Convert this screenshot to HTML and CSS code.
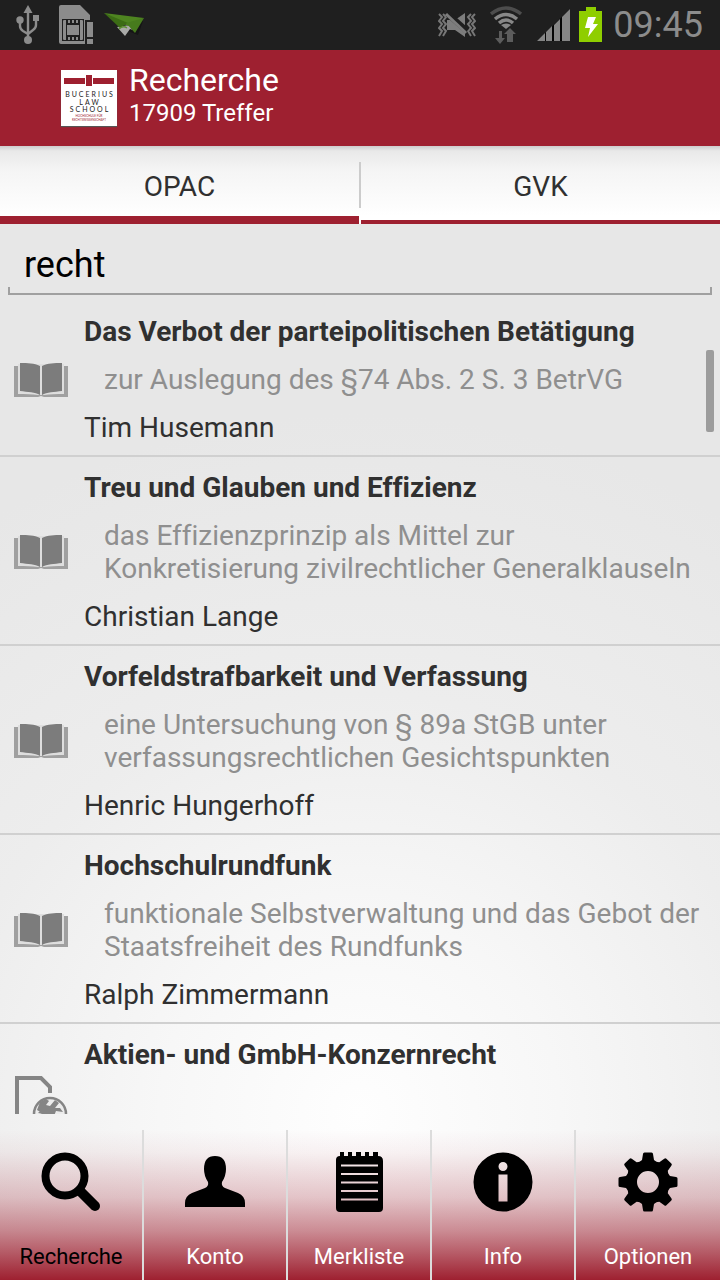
FILE: index.html
```html
<!DOCTYPE html>
<html lang="de">
<head>
<meta charset="utf-8">
<meta name="viewport" content="width=device-width, initial-scale=1">
<title>Recherche</title>
<link rel="stylesheet" href="styles.css">
</head>
<body>
<svg class="defs" width="0" height="0" aria-hidden="true">
  <symbol id="book" viewBox="0 0 56 36">
    <path fill="#a0a0a0" d="M1 4h4v26l20 1 2 2h2l2-2 20-1V4h4v31H31l-3-1-3 1H1z"/>
    <path fill="#dedede" d="M5 2h46v30c-8 0-14 0-20 1h-6c-6-1-12-1-20-1z"/>
    <path fill="#7c7c7c" d="M7 1c8 0 14 0 20 3v29c-5-3-12-3-20-4zM49 1c-8 0-14 0-20 3v29c5-3 12-3 20-4z"/>
  </symbol>
</svg>
<div class="app">
  <div class="status">
    <div class="status-group">
      <svg width="24" height="40" viewBox="0 0 24 40">
        <g fill="none" stroke="#8c8c8c" stroke-width="2.400"><path d="M12 6v28M4 15v6q0 3 3 5l5 3M20 13v7q0 3-3 5l-5 4"/></g>
        <g fill="#8c8c8c"><path d="M12 0l4.500 8h-9z"/><circle cx="4" cy="15" r="3.700"/><path d="M17 10h6v6h-6z"/><circle cx="12" cy="35" r="4"/></g>
      </svg>
      <svg class="sim" width="34" height="40" viewBox="0 0 34 40">
        <path fill="#8c8c8c" d="M2 0h19l10 10v5h-5v24H2q-2 0-2-2V2q0-2 2-2z"/>
        <path fill="#1f1f1f" d="M3 14h22v22H3z"/>
        <path fill="#8c8c8c" d="M4 16q0-1 1-1h2v20H5q-1 0-1-1zM21 15h2q1 0 1 1v18q0 1-1 1h-2zM8 20h12v10H8zM9 15h2v3H9zM13 15h2v3h-2zM17 15h2v3h-2zM9 32h2v3H9zM13 32h2v3h-2zM17 32h2v3h-2zM28 17h6v15h-6zM28 34h6v5h-6z"/>
      </svg>
      <svg width="42" height="26" viewBox="0 0 42 26">
        <path fill="#151515" d="M14 15l20 8 5-14z"/>
        <path fill="#a9aaa8" d="M13 15l12-2 4 5-3-1-5 7z"/>
        <path fill="#4e8420" d="M0 1l40 5-16 8z"/><path fill="#3c6c15" d="M0 1l24 10-8 5z"/><path fill="#477b1d" d="M22 11L40 6l-9 15z"/>
        <path fill="none" stroke="#5d8f32" stroke-width="1.500" d="M15 17q4-4 8-1"/>
      </svg>
    </div>
    <div class="status-group status-right">
      <svg width="38" height="28" viewBox="0 0 38 28">
        <g fill="none" stroke="#777" stroke-width="2"><path d="M1 3l3 3-3 4 3 3-3 4 3 3-3 5M5 3l3 3-3 4 3 3-3 4 3 3-3 5M33 3l-3 3 3 4-3 3 3 4-3 3 3 5M37 3l-3 3 3 4-3 3 3 4-3 3 3 5"/></g>
        <path fill="#7d7d7d" d="M9 9h8l10-7v24l-10-7H9z"/>
        <path stroke="#1f1f1f" stroke-width="6" d="M10 3l19 17"/><path stroke="#7d7d7d" stroke-width="3" d="M8 3l20 19"/>
      </svg>
      <svg class="wifi" width="32" height="38" viewBox="0 0 32 38">
        <g fill="none" stroke-width="3.500"><path stroke="#4d4d4d" d="M1 8q15-12 30 0"/><path stroke="#888" d="M5 13q11-9 22 0M9 17q7-6 14 0"/></g>
        <path fill="#888" d="M11 19q5-3 10 0l-5 4z"/>
        <path fill="#5c5c5c" d="M9 25h3v7h3l-5 6-5-6h4zM20 36h-3v-8h-3l6-6 6 6h-3v8z"/>
      </svg>
      <svg width="34" height="34" viewBox="0 0 34 34">
        <path fill="#050505" d="M0 33L33 1v32z"/>
        <path fill="#858585" d="M0 33l8-8v8zM9 33V24l6-6v15zM17 33V17l6-6v22zM25 33V9l8-8v32z"/>
      </svg>
      <svg class="battery" width="24" height="36" viewBox="0 0 24 36">
        <path fill="#8fce00" d="M7 0h10v4h6v31H0V4h7z"/><path fill="#fff" d="M9 10h8l-3 7h5L9 30l2-9H6z"/>
      </svg>
      <span class="time">09:45</span>
    </div>
  </div>

  <header class="header">
    <svg class="logo" width="56" height="56" viewBox="0 0 56 56" role="img" aria-label="Bucerius Law School">
      <path fill="#fff" d="M0 0h56v56H0z"/>
      <path fill="#9e2030" d="M3 8h21v6H3zM32 8h21v6H32zM25 5h6v11h-6z"/>
      <g class="logo-name" text-anchor="middle"><text x="29" y="27">BUCERIUS</text><text x="29" y="35">LAW</text><text x="29" y="42">SCHOOL</text></g>
      <g class="logo-sub" text-anchor="middle"><text x="28" y="47">HOCHSCHULE FÜR</text><text x="28" y="51">RECHTSWISSENSCHAFT</text></g>
    </svg>
    <div>
      <h1 class="title">Recherche</h1>
      <p class="subtitle">17909 Treffer</p>
    </div>
  </header>

  <div class="tabs" role="tablist">
    <button class="tab tab-active" role="tab" aria-selected="true">OPAC</button>
    <span class="tab-divider"></span>
    <button class="tab" role="tab" aria-selected="false">GVK</button>
  </div>

  <div class="search"><input class="search-input" type="text" value="recht" aria-label="Suche"></div>

  <main class="results">
    <ul class="list">
      <li class="row"><svg class="row-icon" width="56" height="36"><use href="#book"/></svg><div class="row-text"><h2 class="row-title">Das Verbot der parteipolitischen Betätigung</h2><p class="row-sub">zur Auslegung des §74 Abs. 2 S. 3 BetrVG</p><p class="row-author">Tim Husemann</p></div></li>
      <li class="row"><svg class="row-icon" width="56" height="36"><use href="#book"/></svg><div class="row-text"><h2 class="row-title">Treu und Glauben und Effizienz</h2><p class="row-sub">das Effizienzprinzip als Mittel zur Konkretisierung zivilrechtlicher Generalklauseln</p><p class="row-author">Christian Lange</p></div></li>
      <li class="row"><svg class="row-icon" width="56" height="36"><use href="#book"/></svg><div class="row-text"><h2 class="row-title">Vorfeldstrafbarkeit und Verfassung</h2><p class="row-sub">eine Untersuchung von § 89a StGB unter verfassungsrechtlichen Gesichtspunkten</p><p class="row-author">Henric Hungerhoff</p></div></li>
      <li class="row"><svg class="row-icon" width="56" height="36"><use href="#book"/></svg><div class="row-text"><h2 class="row-title">Hochschulrundfunk</h2><p class="row-sub">funktionale Selbstverwaltung und das Gebot der Staatsfreiheit des Rundfunks</p><p class="row-author">Ralph Zimmermann</p></div></li>
      <li class="row row-short">
        <svg class="row-icon" width="56" height="56" viewBox="0 0 56 56">
          <path fill="none" stroke="#858585" stroke-width="4" d="M22 53H4V3h24l9 9v6"/>
          <circle cx="37" cy="39" r="16" fill="#ececec" stroke="#858585" stroke-width="2.500"/>
          <path fill="#858585" d="M27 27l6-3 3 2-3 4 4 1 5-6 4 3-4 5 5 0 3 4-7-1-2 5-5 3-6 1-5-4 4-3-5-3zM29 34l4 3-2 2-6-1z"/>
        </svg>
        <div class="row-text"><h2 class="row-title">Aktien- und GmbH-Konzernrecht</h2></div>
      </li>
    </ul>
    <span class="scrollbar"></span>
  </main>

  <nav class="nav">
    <a class="nav-item nav-active" href="#recherche">
      <svg width="60" height="60" viewBox="0 0 60 60"><circle cx="24" cy="24" r="19.500" fill="none" stroke="#000" stroke-width="8"/><path d="M40 40l14 14" stroke="#000" stroke-width="10" stroke-linecap="round"/></svg>
      <span>Recherche</span></a>
    <a class="nav-item" href="#konto">
      <svg width="60" height="60" viewBox="0 0 60 60"><path d="M0 55v-4q0-7 7-10l13-5q4-2 3-6-4-6-4-13Q19 4 30 4t11 13q0 7-4 13-1 4 3 6l13 5q7 3 7 10v4z"/></svg>
      <span>Konto</span></a>
    <a class="nav-item" href="#merkliste">
      <svg width="60" height="60" viewBox="0 0 60 60"><path fill-rule="evenodd" d="M11 4V0h4v4h4V0h4v4h4V0h5v4h4V0h4v4h4V0h5v4q5 0 5 5v47q0 4-4 4H11q-4 0-4-4V8q0-4 4-4zM12 12.500h37v2H12zM12 21h37v2H12zM12 29.500h37v2H12zM12 38h37v2H12zM12 46.500h37v2H12z"/></svg>
      <span>Merkliste</span></a>
    <a class="nav-item" href="#info">
      <svg width="60" height="60" viewBox="0 0 60 60"><path fill-rule="evenodd" d="M30 .5a29.500 29.500 0 1 1 0 59 29.500 29.500 0 1 1 0-59zM30 10a4.500 4.500 0 1 0 0 9 4.500 4.500 0 1 0 0-9zM25.500 22.500h9v27h-9z"/></svg>
      <span>Info</span></a>
    <a class="nav-item" href="#optionen">
      <svg width="60" height="60" viewBox="0 0 60 60">
        <circle cx="30" cy="30" r="16" fill="none" stroke="#000" stroke-width="10"/>
        <g id="teeth"><path d="M25 2q0-1.500 1.500-1.500h7Q35 .5 35 2l1 6 4 3-10 4-10-4 4-3z"/><path d="M25 58q0 1.500 1.500 1.500h7q1.500 0 1.500-1.500l1-6 4-3-10-4-10 4 4 3z"/><path d="M2 25q-1.500 0-1.500 1.500v7Q.5 35 2 35l6 1 3 4 4-10-4-10-3 4z"/><path d="M58 25q1.500 0 1.500 1.500v7q0 1.500-1.500 1.500l-6 1-3 4-4-10 4-10 3 4z"/></g>
        <use href="#teeth" transform="rotate(45 30 30)"/>
      </svg>
      <span>Optionen</span></a>
  </nav>
</div>
</body>
</html>
```
FILE: styles.css
```css
* { box-sizing: border-box; }
body { margin: 0; font-family: Roboto, "Noto Sans", sans-serif; font-variant-ligatures: none; color: #303030; }
h1, h2, p, ul { margin: 0; padding: 0; font-weight: 400; }
.defs { position: absolute; }
.app {
  display: flex; flex-direction: column; height: 100vh;
  background: radial-gradient(circle at 50% 87%, #fefefe 0, #f7f7f7 200px, #ededed 420px, #e7e7e7 700px);
}
.status {
  display: flex; justify-content: space-between; align-items: center;
  flex: none; height: 50px; padding: 0 17px 0 16px; background: #1f1f1f;
}
.status-group { display: flex; align-items: center; gap: 11px; }
.sim { margin-left: 8px; }
.status-right { gap: 8px; }
.wifi { margin: 0 7px 0 6px; }
.battery { margin-right: 2px; }
.time { font-size: 36px; line-height: 48px; color: #8c8c8c; }

.header {
  display: flex; align-items: center; gap: 12px; flex: none;
  height: 96px; padding: 0 61px; background: #9e2030; color: #fff;
}
.logo { flex: none; box-shadow: 0 1px 1px #555; }
.logo-name { font: 7px Lato, sans-serif; letter-spacing: 2px; fill: #222; }
.logo-sub { font: 3px Lato, sans-serif; fill: #9e2030; }
.title { font-size: 32px; line-height: 36px; }
.subtitle { padding-bottom: 6px; font-size: 24px; line-height: 30px; }

.tabs {
  display: flex; flex: none; height: 78px;
  background: linear-gradient(#ccc 0, #e9e9e9 5px, #f5f5f5 25px, #fff 70px);
}
.tab {
  flex: 1; padding: 6px 0 0; border: 0; border-bottom: 4px solid #9e2030;
  background: none; font: 28px Roboto, sans-serif; color: #303030;
}
.tab-active { border-bottom-width: 8px; padding-top: 10px; }
.tab-divider { width: 2px; margin: 16px 0; background: #ccc; }

.search { flex: none; padding: 4px 8px 6px; }
.search-input {
  display: block; width: 100%; height: 67px; padding: 6px 16px 0; border: 0;
  background:
    linear-gradient(#a0a0a0, #a0a0a0) bottom / 100% 2px no-repeat,
    linear-gradient(#a0a0a0, #a0a0a0) left bottom / 2px 8px no-repeat,
    linear-gradient(#a0a0a0, #a0a0a0) right bottom / 2px 8px no-repeat;
  font: 36px Roboto, sans-serif; color: #000; outline: 0;
}

.results { position: relative; flex: 1; min-height: 0; overflow: hidden; }
.list { list-style: none; }
.row {
  display: flex; align-items: center; gap: 15px;
  padding: 14px 8px 11px 13px; border-bottom: 2px solid #d0d0d0;
  font-size: 28px; line-height: 33px;
}
.row-icon { flex: none; }
.row-text { display: flex; flex-direction: column; gap: 15px; }
.row-title { font-size: 28px; font-weight: 700; }
.row-sub { padding-left: 20px; color: #8f8f8f; }
.row-short { min-height: 156px; }
.row-short .row-text { align-self: flex-start; }
.scrollbar {
  position: absolute; top: 49px; right: 6px; width: 8px; height: 82px;
  border-radius: 2px; background: #9c9c9c;
}

.nav {
  display: grid; grid-template-columns: repeat(5, 1fr); flex: none; height: 150px; margin-top: 16px;
  background: linear-gradient(#9e203000 0, #9e20300d 15%, #9e203040 45%, #9e203080 67%, #9e2030b8 82%, #9e2030 100%);
}
.nav-item {
  display: flex; flex-direction: column; align-items: center; gap: 31px;
  padding-top: 22px; border-right: 2px solid #dcdcdc;
  font-size: 22px; line-height: 28px; color: #fff; text-decoration: none;
}
.nav-item:last-child { border-right: 0; }
.nav-active { color: #000; }
```
